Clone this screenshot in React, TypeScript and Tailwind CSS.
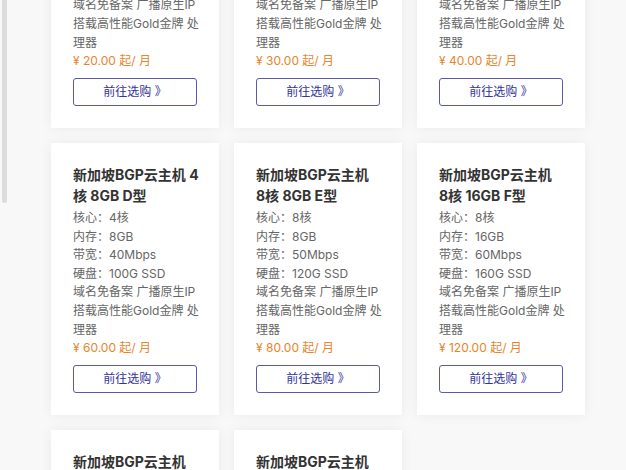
import React from 'react'

type Plan = {
  title: [string, string]
  cpu: string
  mem: string
  bw: string
  disk: string
  price: string
}

const plans: Plan[] = [
  { title: ['新加坡BGP云主机 1', '核 1GB A型'], cpu: '1核', mem: '1GB', bw: '10Mbps', disk: '40G SSD', price: '20.00' },
  { title: ['新加坡BGP云主机 2', '核 2GB B型'], cpu: '2核', mem: '2GB', bw: '20Mbps', disk: '60G SSD', price: '30.00' },
  { title: ['新加坡BGP云主机 2', '核 4GB C型'], cpu: '2核', mem: '4GB', bw: '30Mbps', disk: '80G SSD', price: '40.00' },
  { title: ['新加坡BGP云主机 4', '核 8GB D型'], cpu: '4核', mem: '8GB', bw: '40Mbps', disk: '100G SSD', price: '60.00' },
  { title: ['新加坡BGP云主机', '8核 8GB E型'], cpu: '8核', mem: '8GB', bw: '50Mbps', disk: '120G SSD', price: '80.00' },
  { title: ['新加坡BGP云主机', '8核 16GB F型'], cpu: '8核', mem: '16GB', bw: '60Mbps', disk: '160G SSD', price: '120.00' },
  { title: ['新加坡BGP云主机', '16核 16GB G型'], cpu: '16核', mem: '16GB', bw: '80Mbps', disk: '200G SSD', price: '160.00' },
  { title: ['新加坡BGP云主机', '16核 32GB H型'], cpu: '16核', mem: '32GB', bw: '100Mbps', disk: '300G SSD', price: '240.00' },
]

// one product card
function PlanCard({ p }: { p: Plan }) {
  return (
    <div className="bg-white shadow-[0_0_12px_rgba(0,0,0,0.06)] px-[22px] pt-[21px] pb-[22px] h-[272px]">
      <div className="text-[14px] leading-[21px] font-bold text-[#333] whitespace-nowrap">
        {p.title[0]}
        <br />
        {p.title[1]}
      </div>
      <div className="mt-[3px] text-[12px] leading-[18.6px] text-[#666] whitespace-nowrap">
        <div>核心：{p.cpu}</div>
        <div>内存：{p.mem}</div>
        <div>带宽：{p.bw}</div>
        <div>硬盘：{p.disk}</div>
        <div>域名免备案 广播原生IP</div>
        <div>搭载高性能Gold金牌 处</div>
        <div>理器</div>
        <div className="text-[#e8842c]">¥ {p.price} 起/ 月</div>
      </div>
      <button className="mt-[7px] w-[124px] h-[28px] border border-[#5a5aa8] rounded-[3px] text-[12px] text-[#34349a] flex items-center justify-center bg-white">
        前往选购 》
      </button>
    </div>
  )
}

export default function App() {
  return (
    <div
      className="relative w-[626px] h-[470px] overflow-hidden bg-[#f8f8f8]"
      style={{ fontFamily: 'Inter, "Noto Sans CJK SC", sans-serif' }}
    >
      <div className="absolute left-[2px] top-0 w-[5px] h-[203px] bg-[#dcdcdc] rounded-b-[3px]" />
      <div className="pl-[51px] mt-[-144px] grid grid-cols-[168px_168px_168px] gap-x-[15px] gap-y-[15px]">
        {plans.map((p, i) => (
          <PlanCard key={i} p={p} />
        ))}
      </div>
    </div>
  )
}
